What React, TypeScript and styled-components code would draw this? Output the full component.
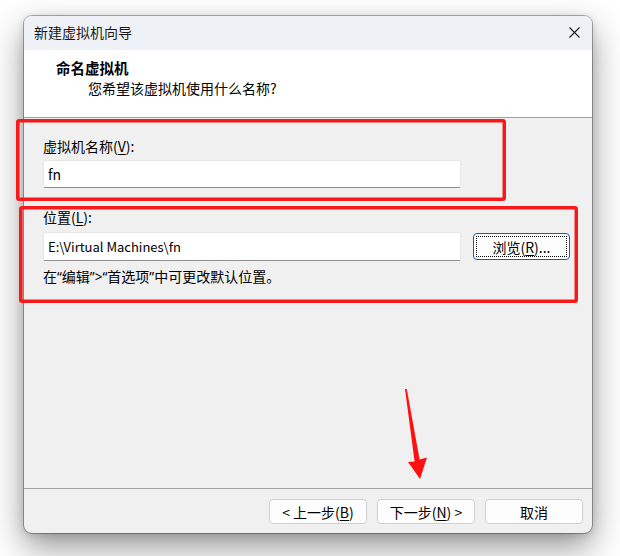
import React from "react";
import styled, { createGlobalStyle } from "styled-components";

const GlobalStyle = createGlobalStyle`
  html, body {
    margin: 0;
    padding: 0;
    background: #ffffff;
  }
  body {
    font-family: "Microsoft YaHei UI", "Noto Sans CJK SC", "Noto Sans", sans-serif;
    color: #000;
    -webkit-font-smoothing: antialiased;
  }
`;

const Page = styled.div`
  position: relative;
  width: 620px;
  height: 556px;
  padding: 16px 0 0 24px;
  box-sizing: border-box;
  overflow: hidden;
  background: #ffffff;
`;

const Window = styled.div`
  width: 568px;
  height: 517px;
  display: flex;
  flex-direction: column;
  border-radius: 8px;
  overflow: hidden;
  background: #f0f0f0;
  box-shadow: 0 0 0 1px rgba(0, 0, 0, 0.3), 0 14px 34px rgba(0, 0, 0, 0.42),
    0 2px 10px rgba(0, 0, 0, 0.14);
`;

const TitleBar = styled.div`
  height: 34px;
  flex: none;
  box-sizing: border-box;
  display: flex;
  align-items: center;
  justify-content: space-between;
  padding: 0 11px 2px 10px;
  background: #eef2f7;
`;

const TitleText = styled.span`
  font-size: 14px;
  line-height: 20px;
  color: #1a1a1a;
`;

const CloseButton = styled.div`
  width: 14px;
  height: 14px;
  display: flex;
  align-items: center;
  justify-content: center;
`;

const Header = styled.div`
  height: 68px;
  flex: none;
  box-sizing: border-box;
  padding: 7px 0 0 32px;
  background: #ffffff;
  border-bottom: 1px solid #a0a0a0;
  display: flex;
  flex-direction: column;
`;

const HeaderTitle = styled.div`
  font-size: 14.5px;
  line-height: 21px;
  font-weight: 700;
`;

const HeaderSub = styled.div`
  font-size: 14px;
  line-height: 20px;
  padding-left: 32px;
`;

const Body = styled.div`
  flex: 1;
  padding: 18px 0 0 19px;
  display: flex;
  flex-direction: column;
  border-bottom: 1px solid #a0a0a0;
`;

const Field = styled.div<{ $spaced?: boolean }>`
  display: flex;
  flex-direction: column;
  margin-top: ${(p) => (p.$spaced ? "19px" : "0")};
`;

const Label = styled.div`
  font-size: 14px;
  line-height: 20px;
`;

const Key = styled.span`
  text-decoration: underline;
  text-underline-offset: 2px;
`;

const Narrow = styled.span`
  font-family: "Noto Sans", "Liberation Sans", sans-serif;
  font-size: 13.5px;
`;

const Latin = styled.span`
  font-size: 13px;
`;

const TextBox = styled.div<{ $h?: number }>`
  width: 418px;
  height: ${(p) => p.$h ?? 28}px;
  box-sizing: border-box;
  background: #ffffff;
  border: 1px solid #e6e6e6;
  border-bottom: 1px solid #8d8d8d;
  border-radius: 2px;
  padding-left: 4px;
  display: flex;
  align-items: center;
  font-size: 14px;
  line-height: 20px;
  margin-top: 4px;
`;

const Row = styled.div`
  display: flex;
  align-items: center;
  gap: 12px;
  margin-top: 1px;
`;

const BrowseButton = styled.div`
  width: 97px;
  height: 27px;
  box-sizing: border-box;
  margin-top: 4px;
  border: 1px solid #0067c0;
  border-radius: 4px;
  background: #fdfdfd;
  display: flex;
  align-items: center;
  justify-content: center;
  font-size: 14px;
  line-height: 20px;
  outline: 1px dotted #000;
  outline-offset: -4px;
`;

const Hint = styled.div`
  font-size: 14px;
  line-height: 20px;
  margin-top: 5px;
`;

const Footer = styled.div`
  height: 44px;
  flex: none;
  box-sizing: border-box;
  display: flex;
  justify-content: flex-end;
  gap: 10px;
  padding: 10px 9px 0 0;
`;

const FooterButton = styled.div`
  width: 98px;
  height: 25px;
  box-sizing: border-box;
  border: 1px solid #d0d0d0;
  border-radius: 4px;
  background: #fdfdfd;
  display: flex;
  align-items: center;
  justify-content: center;
  font-size: 14px;
  line-height: 20px;
`;

const Overlay = styled.svg`
  position: absolute;
  left: 0;
  top: 0;
  width: 620px;
  height: 556px;
  pointer-events: none;
`;

export default function App() {
  return (
    <>
      <GlobalStyle />
      <Page>
        <Window>
          <TitleBar>
            <TitleText>新建虚拟机向导</TitleText>
            <CloseButton>
              <svg width="11" height="11" viewBox="0 0 11 11">
                <path d="M0.5 0.5 L10.5 10.5 M10.5 0.5 L0.5 10.5" stroke="#1a1a1a" strokeWidth="1.1" fill="none" />
              </svg>
            </CloseButton>
          </TitleBar>
          <Header>
            <HeaderTitle>命名虚拟机</HeaderTitle>
            <HeaderSub>您希望该虚拟机使用什么名称?</HeaderSub>
          </Header>
          <Body>
            <Field>
              <Label>
                虚拟机名称(<Key>V</Key>):
              </Label>
              <TextBox>fn</TextBox>
            </Field>
            <Field $spaced>
              <Label>
                位置(<Key>L</Key>):
              </Label>
              <Row>
                <TextBox $h={29}>
                  <Latin>E:\Virtual Machines\fn</Latin>
                </TextBox>
                <BrowseButton>
                  浏览(<Key>R</Key>)...
                </BrowseButton>
              </Row>
              <Hint>
                在<Narrow>“</Narrow>编辑<Narrow>”&gt;“</Narrow>首选项<Narrow>”</Narrow>中可更改默认位置。
              </Hint>
            </Field>
          </Body>
          <Footer>
            <FooterButton>
              &lt; 上一步(<Key>B</Key>)
            </FooterButton>
            <FooterButton>
              下一步(<Key>N</Key>) &gt;
            </FooterButton>
            <FooterButton>取消</FooterButton>
          </Footer>
        </Window>
        <Overlay viewBox="0 0 620 556">
          <rect x="17.75" y="120.75" width="486.5" height="78.5" rx="1.5" fill="none" stroke="#f81a1a" strokeWidth="3.5" />
          <rect x="20.75" y="207.75" width="555.5" height="93.5" rx="1.5" fill="none" stroke="#f81a1a" strokeWidth="3.5" />
          <polygon
            points="405,389 406.8,389 419.6,459.5 427,457.5 420,479 408,462 414.6,461.5"
            fill="#ff1010"
          />
        </Overlay>
      </Page>
    </>
  );
}
